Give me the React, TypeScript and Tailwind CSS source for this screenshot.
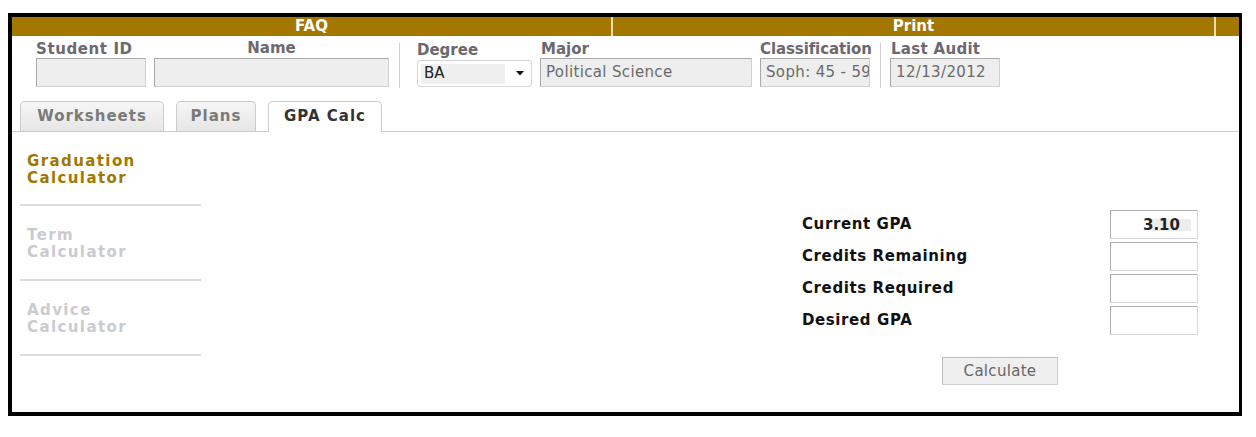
import React from "react";

const F = { fontFamily: '"DejaVu Sans", Verdana, sans-serif' };

function Label({ children, className = "" }: { children: React.ReactNode; className?: string }) {
  return (
    <div className={`h-[18px] text-[15px] leading-[18px] font-bold text-[#6c6870] whitespace-nowrap ${className}`}>
      {children}
    </div>
  );
}

function Field({ value, w }: { value?: string; w: string }) {
  return (
    <div
      className={`${w} h-[29px] bg-[#eeeeee] border border-[#d0d0d0] border-t-[#a8a8a8] border-l-[#a8a8a8] pl-[5px] pr-[2px] flex items-center overflow-hidden whitespace-nowrap text-[15px] tracking-[0.35px] text-[#6a6a6a]`}
    >
      <span className="whitespace-nowrap">{value}</span>
    </div>
  );
}

function NavItem({ lines, active, pb }: { lines: string[]; active?: boolean; pb: string }) {
  return (
    <div className={`pt-[21px] ${pb} border-b-2 border-[#dcdcdc] pl-[7px]`}>
      {lines.map((l) => (
        <div
          key={l}
          className={`text-[15px] leading-[17px] font-bold tracking-[1.4px] ${active ? "text-[#a07800]" : "text-[#c9cbd0]"}`}
        >
          {l}
        </div>
      ))}
    </div>
  );
}

function FormRow({ label, children }: { label: string; children?: React.ReactNode }) {
  return (
    <div className="flex items-center justify-between h-[29px]">
      <div className="text-[15px] font-bold tracking-[0.6px] text-[#111]">{label}</div>
      <div className="w-[88px] h-[29px] bg-white border border-[#d8d8d8] border-t-[#b0b0b0] border-l-[#b0b0b0] flex items-center justify-end pr-[6px]">
        {children}
      </div>
    </div>
  );
}

export default function App() {
  return (
    <div className="w-[1256px] h-[437px] bg-white overflow-hidden" style={F}>
      <div className="ml-[8px] mt-[13px] w-[1234px] h-[403px] border-t-4 border-l-4 border-b-4 border-r-[3px] border-black flex flex-col">
        {/* gold bar */}
        <div className="h-[19px] flex bg-[#a47800] text-white text-[15px] font-bold leading-[19px]">
          <div className="w-[599px] text-center">FAQ</div>
          <div className="w-[2px] bg-[#ecdcb0]" />
          <div className="w-[601px] text-center">Print</div>
          <div className="w-[2px] bg-[#ecdcb0]" />
          <div className="flex-1" />
        </div>

        {/* header fields */}
        <div className="flex items-start pt-[4px] pl-[24px]">
          <div className="w-[110px]">
            <Label className="tracking-[0.6px]">Student ID</Label>
            <Field w="w-[110px]" />
          </div>
          <div className="w-[235px] ml-[8px]">
            <Label className="text-center -mt-[1px] mb-[1px]">Name</Label>
            <Field w="w-[235px]" />
          </div>
          <div className="ml-[10px] mt-[3px] w-px h-[45px] bg-[#d0d0d0]" />
          <div className="w-[115px] ml-[17px]">
            <Label className="mt-[1px] -mb-[1px]">Degree</Label>
            <div className="mt-[2px] h-[27px] w-[115px] border border-[#d6d6d6] rounded-[3px] bg-white flex items-center pl-[3px]">
              <div className="w-[84px] h-[20px] bg-[#efefef] pl-[3px] flex items-center text-[15px] text-[#222]">BA</div>
              <svg className="ml-[11px]" width="8" height="5" viewBox="0 0 8 5">
                <path d="M0 0H8L4 4.5Z" fill="#111" />
              </svg>
            </div>
          </div>
          <div className="w-[212px] ml-[8px]">
            <Label className="pl-[1px]">Major</Label>
            <Field w="w-[212px]" value="Political Science" />
          </div>
          <div className="w-[110px] ml-[8px]">
            <Label className="tracking-[-0.1px]">Classification</Label>
            <Field w="w-[110px]" value="Soph: 45 - 59" />
          </div>
          <div className="ml-[10px] mt-[3px] w-px h-[45px] bg-[#d0d0d0]" />
          <div className="w-[110px] ml-[9px]">
            <Label className="pl-[1px] tracking-[0.3px]">Last Audit</Label>
            <Field w="w-[110px]" value="12/13/2012" />
          </div>
        </div>

        {/* tabs */}
        <div className="mt-[13px] h-[31px] flex items-end gap-[12px] pl-[8px] border-b border-[#cccccc]">
          <div className="w-[144px] h-[30px] rounded-t-[5px] border border-b-0 border-[#cccccc] bg-[linear-gradient(#f6f6f6,#e6e6e6)] flex items-center justify-center text-[15px] font-bold tracking-[1px] text-[#7a7a7a]">
            Worksheets
          </div>
          <div className="w-[80px] h-[30px] rounded-t-[5px] border border-b-0 border-[#cccccc] bg-[linear-gradient(#f6f6f6,#e6e6e6)] flex items-center justify-center text-[15px] font-bold tracking-[1px] text-[#7a7a7a]">
            Plans
          </div>
          <div className="w-[114px] h-[31px] -mb-px rounded-t-[5px] border border-b-0 border-[#cccccc] bg-white flex items-center justify-center pb-[1px] text-[15px] font-bold tracking-[1px] text-[#333]">
            GPA Calc
          </div>
        </div>

        {/* body */}
        <div className="flex flex-1">
          <div className="ml-[8px] w-[181px]">
            <NavItem lines={["Graduation", "Calculator"]} active pb="pb-[17px]" />
            <NavItem lines={["Term", "Calculator"]} pb="pb-[18px]" />
            <NavItem lines={["Advice", "Calculator"]} pb="pb-[18px]" />
          </div>
          <div className="ml-auto mr-[41px] w-[396px] pt-[78px]">
            <div className="flex flex-col gap-[3px]">
              <FormRow label="Current GPA">
                <span className="inline-block h-[12px] leading-[12px] pr-[11px] text-[15px] font-bold text-[#222] bg-[linear-gradient(to_right,transparent_8px,#ececec_8px)]">
                  3.10
                </span>
              </FormRow>
              <FormRow label="Credits Remaining" />
              <FormRow label="Credits Required" />
              <FormRow label="Desired GPA" />
            </div>
            <div className="flex justify-center mt-[22px]">
              <div className="w-[116px] h-[28px] bg-[#efefef] border border-[#cfcfcf] border-t-[#bdbdbd] border-l-[#bdbdbd] flex items-center justify-center text-[15px] tracking-[0.3px] text-[#666]">
                Calculate
              </div>
            </div>
          </div>
        </div>
      </div>
    </div>
  );
}
